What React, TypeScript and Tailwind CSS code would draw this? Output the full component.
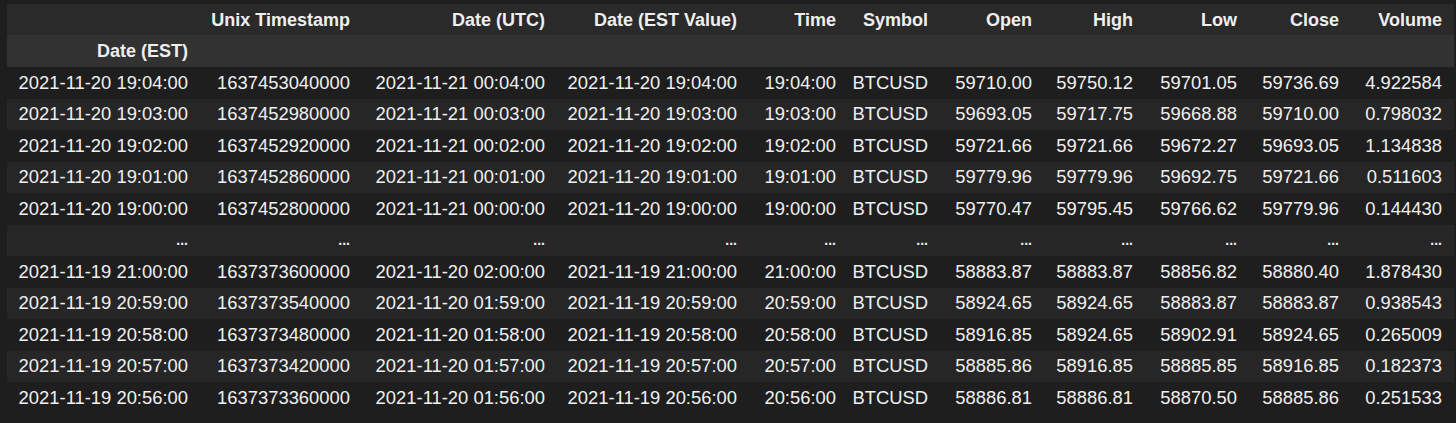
import React from "react";

const headers = ["Unix Timestamp", "Date (UTC)", "Date (EST Value)", "Time", "Symbol", "Open", "High", "Low", "Close", "Volume"];

const rows: string[][] = [
  ["2021-11-20 19:04:00", "1637453040000", "2021-11-21 00:04:00", "2021-11-20 19:04:00", "19:04:00", "BTCUSD", "59710.00", "59750.12", "59701.05", "59736.69", "4.922584"],
  ["2021-11-20 19:03:00", "1637452980000", "2021-11-21 00:03:00", "2021-11-20 19:03:00", "19:03:00", "BTCUSD", "59693.05", "59717.75", "59668.88", "59710.00", "0.798032"],
  ["2021-11-20 19:02:00", "1637452920000", "2021-11-21 00:02:00", "2021-11-20 19:02:00", "19:02:00", "BTCUSD", "59721.66", "59721.66", "59672.27", "59693.05", "1.134838"],
  ["2021-11-20 19:01:00", "1637452860000", "2021-11-21 00:01:00", "2021-11-20 19:01:00", "19:01:00", "BTCUSD", "59779.96", "59779.96", "59692.75", "59721.66", "0.511603"],
  ["2021-11-20 19:00:00", "1637452800000", "2021-11-21 00:00:00", "2021-11-20 19:00:00", "19:00:00", "BTCUSD", "59770.47", "59795.45", "59766.62", "59779.96", "0.144430"],
  ["...", "...", "...", "...", "...", "...", "...", "...", "...", "...", "..."],
  ["2021-11-19 21:00:00", "1637373600000", "2021-11-20 02:00:00", "2021-11-19 21:00:00", "21:00:00", "BTCUSD", "58883.87", "58883.87", "58856.82", "58880.40", "1.878430"],
  ["2021-11-19 20:59:00", "1637373540000", "2021-11-20 01:59:00", "2021-11-19 20:59:00", "20:59:00", "BTCUSD", "58924.65", "58924.65", "58883.87", "58883.87", "0.938543"],
  ["2021-11-19 20:58:00", "1637373480000", "2021-11-20 01:58:00", "2021-11-19 20:58:00", "20:58:00", "BTCUSD", "58916.85", "58924.65", "58902.91", "58924.65", "0.265009"],
  ["2021-11-19 20:57:00", "1637373420000", "2021-11-20 01:57:00", "2021-11-19 20:57:00", "20:57:00", "BTCUSD", "58885.86", "58916.85", "58885.85", "58916.85", "0.182373"],
  ["2021-11-19 20:56:00", "1637373360000", "2021-11-20 01:56:00", "2021-11-19 20:56:00", "20:56:00", "BTCUSD", "58886.81", "58886.81", "58870.50", "58885.86", "0.251533"],
];

export default function App() {
  return (
    <div
      className="w-[1456px] h-[423px] bg-[#1e1e1e] pt-[4px] pl-[7px] overflow-hidden"
      style={{ fontFamily: '"Liberation Sans", Arial, sans-serif' }}
    >
      <table className="table-fixed border-collapse w-[1447px] text-[18px] text-[#efefef]">
        <colgroup>
          <col className="w-[193px]" />
          <col className="w-[162px]" />
          <col className="w-[195px]" />
          <col className="w-[192px]" />
          <col className="w-[99px]" />
          <col className="w-[92px]" />
          <col className="w-[104px]" />
          <col className="w-[101px]" />
          <col className="w-[104px]" />
          <col className="w-[102px]" />
          <col className="w-[103px]" />
        </colgroup>
        <thead>
          <tr className="h-[31px] bg-[#2a2a2a]">
            <th className="p-0 pr-3"></th>
            {headers.map((h) => (
              <th key={h} className="p-0 pr-3 text-right font-bold whitespace-nowrap leading-none">
                {h}
              </th>
            ))}
          </tr>
          <tr className="h-[32px] bg-[#323232]">
            <th className="p-0 pr-3 text-right font-bold whitespace-nowrap leading-none">Date (EST)</th>
            {headers.map((h) => (
              <th key={h} className="p-0"></th>
            ))}
          </tr>
        </thead>
        <tbody>
          {rows.map((r, i) => (
            <tr key={i} className={i % 2 === 1 ? "h-[31.5px] bg-[#262626]" : "h-[31.5px] bg-[#1e1e1e]"}>
              {r.map((c, j) => (
                <td
                  key={j}
                  className={
                    c === "..."
                      ? "p-0 pr-3 text-right whitespace-nowrap leading-none font-bold text-[14px]"
                      : "p-0 pr-3 text-right whitespace-nowrap leading-none text-[18.4px]"
                  }
                >
                  {c}
                </td>
              ))}
            </tr>
          ))}
        </tbody>
      </table>
    </div>
  );
}
